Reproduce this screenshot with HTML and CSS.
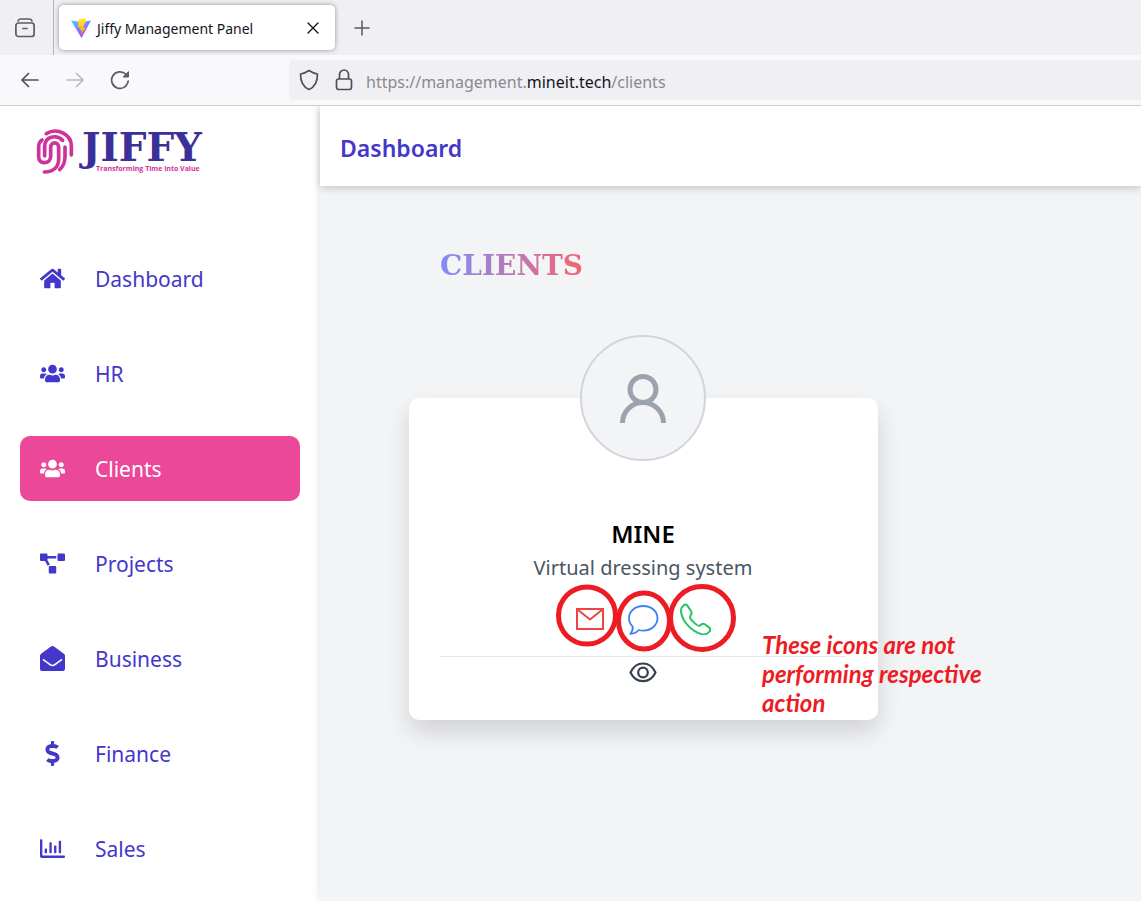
FILE: index.html
```html
<!DOCTYPE html>
<html lang="en">
<head>
<meta charset="utf-8">
<meta name="viewport" content="width=device-width, initial-scale=1">
<title>Jiffy Management Panel</title>
<link rel="stylesheet" href="styles.css">
</head>
<body>
<header class="browser">
  <div class="tabs">
    <button class="tabs-view" aria-label="Recent browsing">
      <svg width="22" height="22" viewBox="0 0 22 22" fill="none" stroke="#5b5b66" stroke-width="1.7" stroke-linecap="round"><path d="M4 4Q4.500 2 6.500 2H15.500Q17.500 2 18 4"/><rect x="1.900" y="6" width="18.200" height="13.500" rx="2.500"/><path d="M9 11.500h4"/></svg>
    </button>
    <div class="tab">
      <svg class="favicon" width="20" height="20" viewBox="0 0 20 20"><defs><linearGradient id="v" x1="0" y1="0" x2=".6" y2="1"><stop stop-color="#41d1ff"/><stop offset="1" stop-color="#bd34fe"/></linearGradient><linearGradient id="b" x1="0" y1="0" x2="0" y2="1"><stop stop-color="#ffea3b"/><stop offset="1" stop-color="#ffa800"/></linearGradient></defs><path d="M0 2.500 10 4 20 2.500 10.500 20Z" fill="url(#v)"/><path d="M14.500 0 7.500 1.500 7 9.500 9.500 9 9 12.500 11 12 10 17 14.500 9.500 12 10 13.500 5.500 14.500 5Z" fill="url(#b)"/></svg>
      <span class="tab-title">Jiffy Management Panel</span>
      <button class="tab-close" aria-label="Close tab"><svg width="12" height="12" viewBox="0 0 12 12" stroke="#15141a" stroke-width="1.400" stroke-linecap="round"><path d="M1 1l10 10M11 1 1 11"/></svg></button>
    </div>
    <button class="tab-new" aria-label="New tab"><svg width="16" height="16" viewBox="0 0 16 16" stroke="#5b5b66" stroke-width="1.500" stroke-linecap="round"><path d="M8 1v14M1 8h14"/></svg></button>
  </div>
  <div class="toolbar">
    <div class="history">
      <button aria-label="Back"><svg width="20" height="20" viewBox="0 0 20 20" fill="none" stroke="#4f4f59" stroke-width="1.700" stroke-linecap="round" stroke-linejoin="round"><path d="M18 10H2M8.500 3.500 2 10l6.500 6.500"/></svg></button>
      <button aria-label="Forward" disabled><svg width="20" height="20" viewBox="0 0 20 20" fill="none" stroke="#b9b9c0" stroke-width="1.700" stroke-linecap="round" stroke-linejoin="round"><path d="M2 10h16M11.500 3.500 18 10l-6.500 6.500"/></svg></button>
      <button aria-label="Reload"><svg width="20" height="20" viewBox="0 0 20 20" fill="none" stroke="#5b5b66" stroke-width="1.700" stroke-linecap="round"><path d="M18.200 11A8.300 8.300 0 1 1 15.800 4.200"/><path d="M18.500 2v5h-5Z" fill="#5b5b66" stroke-width="1"/></svg></button>
    </div>
    <div class="address">
      <svg width="20" height="22" viewBox="0 0 20 22" fill="none" stroke="#4f4f59" stroke-width="1.700" stroke-linejoin="round"><path d="M10 1.500Q5.500 4.500 1.500 5C1.500 13 4 18 10 20.500 16 18 18.500 13 18.500 5Q14.500 4.500 10 1.500Z"/></svg>
      <svg width="18" height="22" viewBox="0 0 18 22" fill="none" stroke="#4f4f59" stroke-width="1.700"><rect x="1.500" y="10" width="15" height="10.500" rx="2.200"/><path d="M4.500 10V5.500a4.500 4.500 0 0 1 9 0V10"/></svg>
      <span class="url">https://management.<b>mineit.tech</b>/clients</span>
    </div>
  </div>
</header>

<div class="app">
  <aside class="sidebar">
    <div class="logo">
      <svg width="38" height="46" viewBox="6 8 114 138" fill="none" stroke="#cf3399" stroke-width="11" stroke-linecap="round"><path d="M37 22C70 2 114 24 112 62V86"/><path d="M24 41Q14 47 14 62V90C14 104 22 109 31 109 43 109 50 101 50 90V64C50 45 74 45 74 64V98C74 122 58 137 31 137"/><path d="M32 89V60C32 32 66 22 86 42"/><path d="M93 62V92Q92 117 77 130"/></svg>
      <div class="logo-words">
        <span class="logo-name">JIFFY</span>
        <span class="logo-tag">Transforming Time into Value</span>
      </div>
    </div>
    <nav class="menu">
      <a href="#"><svg viewBox="0 0 576 512"><path d="M280.370 148.260L96 300.110V464a16 16 0 0 0 16 16l112.060-.290a16 16 0 0 0 15.920-16V368a16 16 0 0 1 16-16h64a16 16 0 0 1 16 16v95.640a16 16 0 0 0 16 16.050L464 480a16 16 0 0 0 16-16V300L295.670 148.260a12.190 12.190 0 0 0-15.300 0zM571.600 251.470L488 182.560V44.050a12 12 0 0 0-12-12h-56a12 12 0 0 0-12 12v72.610L318.470 43a48 48 0 0 0-61 0L4.340 251.470a12 12 0 0 0-1.600 16.900l25.500 31A12 12 0 0 0 45.150 301l235.220-193.740a12.190 12.190 0 0 1 15.300 0L530.900 301a12 12 0 0 0 16.900-1.600l25.500-31a12 12 0 0 0-1.700-16.930z"/></svg>Dashboard</a>
      <a href="#"><svg viewBox="0 0 640 512"><path id="users" d="M96 224c35.300 0 64-28.700 64-64s-28.700-64-64-64-64 28.700-64 64 28.700 64 64 64zm448 0c35.300 0 64-28.700 64-64s-28.700-64-64-64-64 28.700-64 64 28.700 64 64 64zm32 32h-64c-17.600 0-33.500 7.100-45.100 18.600 40.300 22.100 68.900 62 75.100 109.400h66c17.700 0 32-14.300 32-32v-32c0-35.300-28.700-64-64-64zm-256 0c61.900 0 112-50.100 112-112S381.900 32 320 32 208 82.100 208 144s50.100 112 112 112zm76.800 32h-8.300c-20.800 10-43.900 16-68.500 16s-47.600-6-68.500-16h-8.300C179.600 288 128 339.600 128 403.200V432c0 26.500 21.500 48 48 48h288c26.500 0 48-21.500 48-48v-28.800c0-63.600-51.600-115.200-115.200-115.200zm-223.700-13.400C161.500 263.100 145.600 256 128 256H64c-35.300 0-64 28.700-64 64v32c0 17.700 14.300 32 32 32h65.900c6.300-47.400 34.900-87.300 75.200-109.400z"/></svg>HR</a>
      <a href="#" class="active" aria-current="page"><svg viewBox="0 0 640 512"><use href="#users"/></svg>Clients</a>
      <a href="#"><svg viewBox="0 0 640 512"><path d="M384 320H256c-17.670 0-32 14.330-32 32v128c0 17.670 14.330 32 32 32h128c17.670 0 32-14.330 32-32V352c0-17.670-14.330-32-32-32zM192 32c0-17.670-14.330-32-32-32H32C14.330 0 0 14.330 0 32v128c0 17.670 14.330 32 32 32h95.720l73.160 128.040C211.980 300.980 232.400 288 256 288h.280L192 175.510V128h224V64H192V32zM608 0H480c-17.670 0-32 14.330-32 32v128c0 17.670 14.330 32 32 32h128c17.670 0 32-14.330 32-32V32c0-17.670-14.330-32-32-32z"/></svg>Projects</a>
      <a href="#"><svg viewBox="0 0 512 512"><path d="M512 464c0 26.510-21.490 48-48 48H48c-26.510 0-48-21.490-48-48V200.724a48 48 0 0 1 18.387-37.776c24.913-19.529 45.501-35.365 164.200-121.511C199.412 29.170 232.797-.347 256 .003c23.198-.354 56.596 29.172 73.413 41.433 118.687 86.137 139.303 101.995 164.200 121.512A48 48 0 0 1 512 200.724V464zm-65.666-196.605c-2.563-3.728-7.700-4.595-11.339-1.907-22.845 16.873-55.462 40.705-105.582 77.079-16.825 12.266-50.210 41.781-73.413 41.430-23.211.344-56.559-29.143-73.413-41.430-50.114-36.370-82.734-60.204-105.582-77.079-3.639-2.688-8.776-1.821-11.339 1.907l-9.072 13.196a7.998 7.998 0 0 0 1.839 10.967c22.887 16.899 55.454 40.690 105.303 76.868 20.274 14.781 56.524 47.813 92.264 47.573 35.724.242 71.961-32.771 92.263-47.573 49.850-36.179 82.418-59.970 105.303-76.868a7.998 7.998 0 0 0 1.839-10.967l-9.071-13.196z"/></svg>Business</a>
      <a href="#"><svg viewBox="0 0 288 512"><path d="M209.200 233.400l-108-31.600C88.700 198.200 80 186.500 80 173.500c0-16.300 13.200-29.500 29.500-29.500h66.300c12.200 0 24.200 3.700 34.200 10.500 6.100 4.100 14.300 3.100 19.500-2l34.800-34c7.100-6.900 6.100-18.400-1.800-24.500C238 74.800 207.400 64.100 176 64V16c0-8.800-7.200-16-16-16h-32c-8.800 0-16 7.200-16 16v48h-2.500C45.800 64-5.400 118.700.5 183.600c4.200 46.100 39.400 83.600 83.800 96.600l102.500 30c12.500 3.700 21.200 15.300 21.200 28.300 0 16.300-13.200 29.500-29.500 29.500h-66.300C100 368 88 364.300 78 357.500c-6.100-4.100-14.300-3.100-19.500 2l-34.800 34c-7.100 6.900-6.100 18.400 1.800 24.500 24.500 19.200 55.100 29.900 86.500 30v48c0 8.800 7.200 16 16 16h32c8.800 0 16-7.200 16-16v-48.200c46.600-.9 90.300-28.600 105.700-72.700 21.500-61.600-14.600-124.800-72.500-141.700z"/></svg>Finance</a>
      <a href="#"><svg viewBox="0 0 512 512"><path d="M396.800 352h22.400c6.400 0 12.800-6.400 12.800-12.800V108.800c0-6.400-6.400-12.800-12.800-12.800h-22.400c-6.400 0-12.800 6.400-12.800 12.800v230.400c0 6.400 6.400 12.800 12.800 12.800zm-192 0h22.400c6.400 0 12.800-6.400 12.800-12.800V140.800c0-6.400-6.400-12.800-12.800-12.800h-22.400c-6.400 0-12.800 6.400-12.800 12.800v198.400c0 6.400 6.400 12.800 12.800 12.800zm96 0h22.400c6.400 0 12.800-6.400 12.800-12.800V204.800c0-6.400-6.400-12.800-12.800-12.800h-22.400c-6.400 0-12.800 6.400-12.800 12.800v134.400c0 6.400 6.400 12.800 12.800 12.800zM496 400H48V80c0-8.840-7.160-16-16-16H16C7.160 64 0 71.160 0 80v336c0 17.670 14.330 32 32 32h464c8.840 0 16-7.160 16-16v-16c0-8.840-7.160-16-16-16zm-387.200-48h22.400c6.400 0 12.800-6.400 12.800-12.800v-70.400c0-6.400-6.400-12.800-12.800-12.800h-22.400c-6.400 0-12.800 6.400-12.800 12.800v70.400c0 6.400 6.400 12.800 12.800 12.800z"/></svg>Sales</a>
    </nav>
  </aside>

  <div class="page">
    <div class="topbar">Dashboard</div>
    <main class="content">
      <h1 class="heading">CLIENTS</h1>
      <article class="card">
        <div class="avatar"><svg width="48" height="52" viewBox="0 0 48 52" fill="none" stroke="#9ca3af" stroke-width="5"><circle cx="24" cy="17.500" r="13"/><path d="M3.500 51a20.500 20.500 0 0 1 41 0"/></svg></div>
        <h2 class="name">MINE</h2>
        <p class="about">Virtual dressing system</p>
        <div class="actions">
          <button aria-label="Email"><svg width="32" height="32" viewBox="0 0 32 32" fill="none" stroke="#ef4444" stroke-width="2"><path d="M2 6H28V26H2ZM2.500 6.500 15 16.500 27.500 6.500"/></svg></button>
          <button aria-label="Message"><svg width="32" height="32" viewBox="0 0 32 32" fill="none" stroke="#3b82f6" stroke-width="1.800" stroke-linejoin="round"><path d="M16.200 3C8.200 3 2 8.300 2 15c0 3.600 1.200 6.300 3.700 8.600.3 3-.8 5.400-2.300 7.200 3.500-.2 6.500-1.600 8.500-3.800 1.300.4 2.800.6 4.300.6C24.200 27.600 30.500 22 30.500 15.300 30.500 8.300 24.200 3 16.200 3Z"/></svg></button>
          <button aria-label="Call"><svg width="32" height="32" viewBox="0 0 32 32" fill="none" stroke="#22c55e" stroke-width="2" stroke-linejoin="round"><path d="M4.500 2.500C2.500 4 1.500 6 2 8.800 3.500 18.800 13 29 23 31.200 26.500 32 28.500 31 30.500 28.500 31.800 27 31.500 25.700 30.200 24.600L25.800 21.300C24.700 20.500 23.600 20.600 22.500 21.300L20.200 22.800C18.800 23.500 11 16.500 11 14.200L12.200 11.200C12.800 10 12.700 9 12 8L8.200 2.400C7.200 1.100 6 1.300 4.500 2.500Z"/></svg></button>
        </div>
        <div class="view">
          <button aria-label="View client"><svg width="30" height="28" viewBox="0 0 30 28" fill="none" stroke="#374151" stroke-width="2.200"><path d="M2.500 14.500C8 2.500 22 2.500 27.500 14.500 22 26 8 26 2.500 14.500Z" stroke-linejoin="round"/><circle cx="15" cy="14.500" r="4.800"/></svg></button>
        </div>
        <svg class="rings" width="184" height="80" viewBox="0 0 184 80" fill="none" stroke="#ed1c24" stroke-width="5"><ellipse cx="33" cy="35.500" rx="28.500" ry="28.500"/><ellipse cx="90" cy="41" rx="25.500" ry="28"/><ellipse cx="148" cy="38" rx="31.500" ry="31.500"/></svg>
        <p class="note">These icons are not performing respective action</p>
      </article>
    </main>
  </div>
</div>
</body>
</html>
```

FILE: styles.css
```css
* { box-sizing: border-box; }

body {
  margin: 0;
  min-height: 100vh;
  display: flex;
  flex-direction: column;
  font-family: "Noto Sans", "Open Sans", sans-serif;
  background: #fff;
}

button {
  padding: 0;
  border: 0;
  background: none;
  display: flex;
  align-items: center;
  justify-content: center;
}

h1, h2, p { margin: 0; }

/* Browser frame */
.browser { border-bottom: 1px solid #cccccf; }

.tabs {
  height: 55px;
  display: flex;
  align-items: center;
  background: #f0f0f4;
}

.tabs-view {
  width: 54px;
  height: 55px;
  padding-right: 4px;
  border-right: 1px solid #b4b4ba;
}

.tab {
  width: 276px;
  height: 45px;
  margin-left: 5px;
  padding: 0 16px 0 12px;
  display: flex;
  align-items: center;
  gap: 6px;
  border-radius: 5px;
  background: #fff;
  box-shadow: 0 0 5px rgba(0, 0, 0, 0.4);
}

.tab-title {
  flex: 1;
  padding-top: 2px;
  font-size: 14px;
  line-height: 20px;
  color: #15141a;
  white-space: nowrap;
}

.tab-new { margin-left: 19px; }

.toolbar {
  height: 50px;
  display: flex;
  align-items: center;
  background: #f9f9fb;
}

.history {
  width: 289px;
  padding-left: 20px;
  display: flex;
  gap: 25px;
}

.address {
  flex: 1;
  height: 40px;
  padding-left: 10px;
  display: flex;
  align-items: center;
  gap: 16px;
  border-radius: 5px 0 0 5px;
  background: #f0f0f4;
}

.url {
  margin-left: -3px;
  padding-top: 4px;
  font-size: 16px;
  line-height: 24px;
  color: #8a8a90;
  white-space: nowrap;
}

.url b { font-weight: 400; color: #15141a; }

/* Application */
.app { flex: 1; display: flex; }

.sidebar {
  width: 320px;
  flex: none;
  padding: 0 20px;
}

.logo {
  height: 140px;
  padding: 23px 0 0 16px;
  display: flex;
  align-items: flex-start;
  gap: 8px;
}

.logo-words {
  display: flex;
  flex-direction: column;
}

.logo-name {
  font: 700 39px/36px "DejaVu Serif", serif;
  color: #3c2f98;
}

.logo-tag {
  padding-left: 14px;
  font: 700 7px/8px "Open Sans", sans-serif;
  color: #cf3399;
  white-space: nowrap;
}

.menu {
  display: flex;
  flex-direction: column;
  gap: 30px;
}

.menu a {
  height: 65px;
  padding: 0 20px;
  display: flex;
  align-items: center;
  gap: 30px;
  border-radius: 10px;
  font-size: 21px;
  line-height: 34px;
  color: #4338ca;
  text-decoration: none;
}

.menu svg {
  width: 25px;
  height: 25px;
  fill: currentColor;
}

.menu .active { background: #ec4899; color: #fff; }

.page {
  flex: 1;
  display: flex;
  flex-direction: column;
  background: #f3f4f6;
  box-shadow: 0 0 8px rgba(0, 0, 0, 0.12);
  clip-path: inset(0 0 0 -10px);
}

.topbar {
  height: 80px;
  padding: 4px 20px 0;
  display: flex;
  align-items: center;
  background: #fff;
  box-shadow: 0 2px 8px rgba(0, 0, 0, 0.2);
  font-size: 23px;
  font-weight: 600;
  line-height: 34px;
  color: #4338ca;
}

.content { padding: 60px 89px; }

.heading {
  width: fit-content;
  margin-left: 31px;
  font: 700 28px/40px "DejaVu Serif", serif;
  color: transparent;
  background: linear-gradient(to right, #818cf8, #f56570);
  background-clip: text;
  -webkit-background-clip: text;
}

.card {
  position: relative;
  max-width: 469px;
  margin-top: 112px;
  padding: 0 32px 34px 31px;
  border-radius: 10px;
  background: #fff;
  box-shadow: 0 12px 24px rgba(0, 0, 0, 0.14);
  text-align: center;
}

.avatar {
  width: 126px;
  height: 126px;
  margin: 0 auto -7px;
  display: flex;
  align-items: center;
  justify-content: center;
  border: 2px solid #d1d5db;
  border-radius: 50%;
  background: #f3f4f6;
  transform: translateY(-50%);
}

.name {
  font-size: 24px;
  font-weight: 600;
  line-height: 34px;
  color: #000;
}

.about {
  font-size: 20px;
  line-height: 34px;
  color: #4b5563;
}

.actions {
  padding: 18px 0 21px;
  display: flex;
  justify-content: center;
  gap: 20px;
}

.view {
  padding-top: 1px;
  display: flex;
  justify-content: center;
  border-top: 1px solid #e5e7eb;
}

/* Review marks laid over the card */
.rings {
  position: absolute;
  top: 182px;
  left: 145px;
}

.note {
  position: absolute;
  top: 232px;
  left: 353px;
  width: 230px;
  font: italic 700 24px/29px Lato, sans-serif;
  color: #ed1c24;
  text-align: left;
}
```
